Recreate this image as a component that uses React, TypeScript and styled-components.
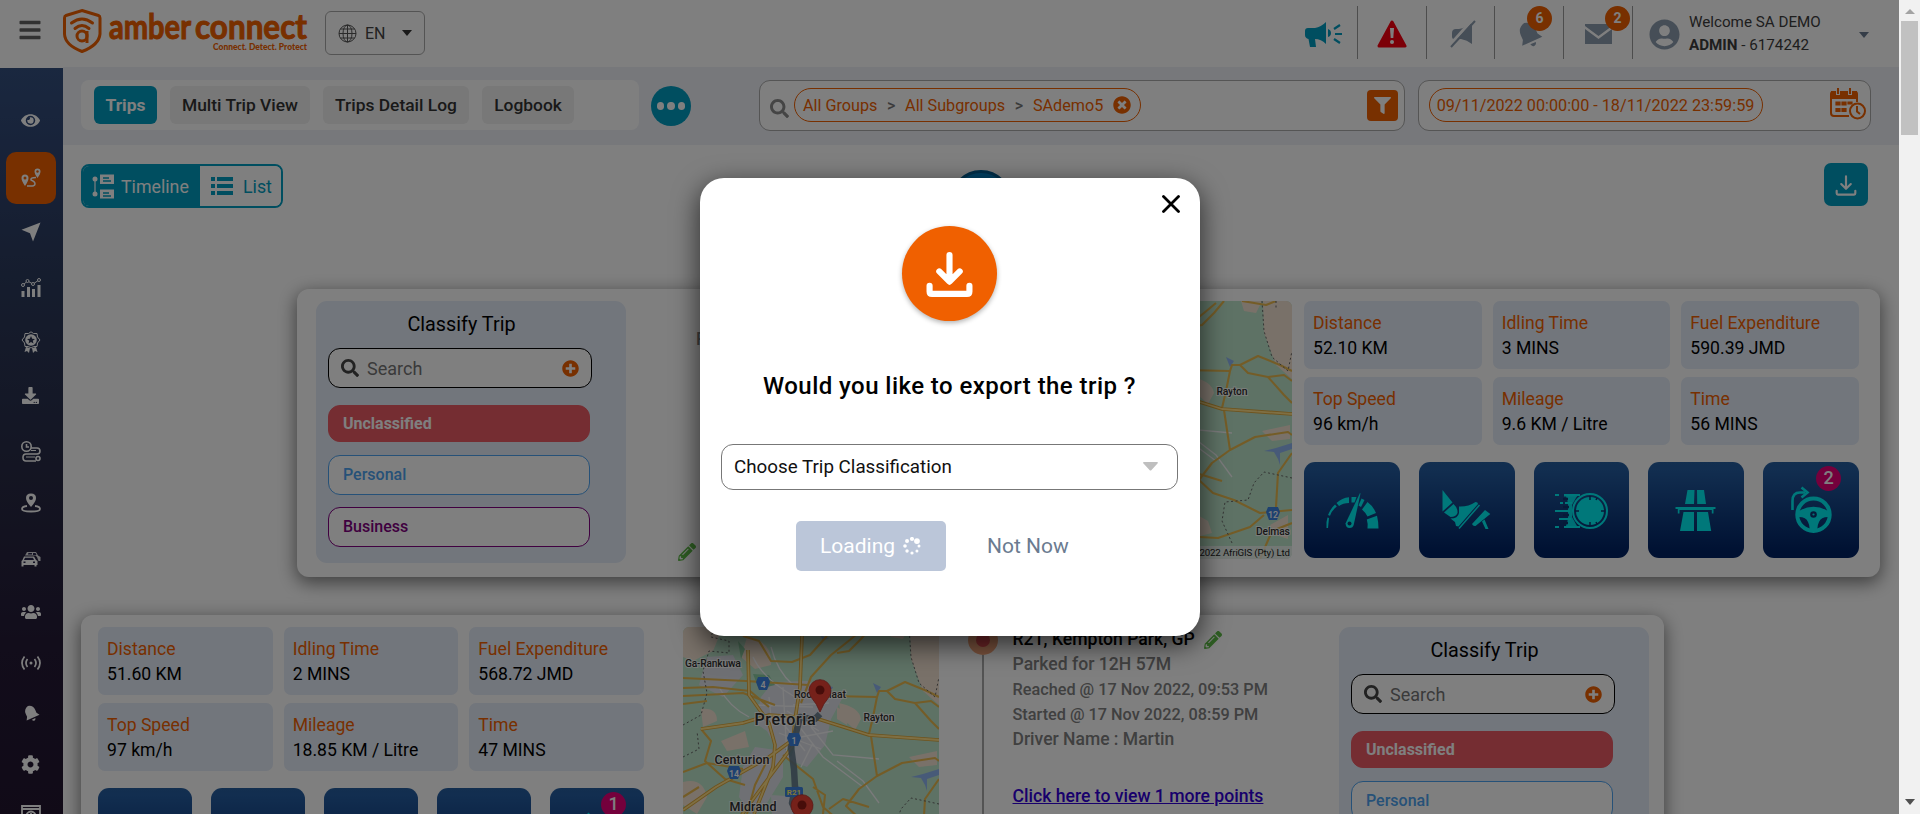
import React from "react";
import styled, { createGlobalStyle } from "styled-components";
import {
  FaBars, FaEye, FaUsers, FaCog, FaSearch, FaFilter,
  FaPlusCircle, FaTimesCircle, FaUserCircle, FaPencilAlt, FaDownload,
} from "react-icons/fa";

const Global = createGlobalStyle`
  *, *::before, *::after { box-sizing: border-box; }
  html, body { margin: 0; padding: 0; overflow: hidden; }
  body { font-family: Roboto, "Liberation Sans", sans-serif; color: #000; background: #fff; }
`;

const teal = "#009cc0";
const orange = "#f06000";

const Shell = styled.div`
  display: flex;
  width: 1920px;
  height: 814px;
  overflow: hidden;
`;
const Page = styled.div`
  position: relative;
  width: 1899px;
  height: 814px;
  overflow: hidden;
  display: flex;
  flex-direction: column;
`;
const Scrollbar = styled.div`
  width: 21px;
  background: #f1f1f1;
  display: flex;
  flex-direction: column;
  align-items: center;
  justify-content: space-between;
  padding: 9px 0 9px;
`;
const ThumbGroup = styled.div`
  display: flex;
  flex-direction: column;
  align-items: center;
  gap: 7px;
`;
const Thumb = styled.div`
  width: 17px;
  height: 114px;
  background: #c1c1c1;
`;

/* ---------- Header ---------- */
const Header = styled.header`
  height: 67px;
  flex: none;
  display: flex;
  align-items: flex-start;
  background: #fff;
`;
const MenuButton = styled.div`
  width: 63px;
  padding: 18px 0 0 18px;
  color: #626262;
  font-size: 24px;
  line-height: 0;
`;
const LangBox = styled.div`
  display: flex;
  align-items: center;
  width: 100px;
  height: 44px;
  margin: 11px 0 0 16px;
  padding: 0 12px 0 12px;
  border: 1px solid #a9a9a9;
  border-radius: 6px;
  color: #444;
  span { margin-left: 8px; flex: 1; font-size: 16px; }
`;
const Spacer = styled.div`flex: 1;`;
const HeadCell = styled.div<{ $w: number }>`
  position: relative;
  width: ${(p) => p.$w}px;
  height: 53px;
  margin-top: 6px;
  border-right: 1px solid #9b9b9b;
  display: flex;
  align-items: center;
  justify-content: center;
  padding-top: 3px;
  color: #8c9cae;
`;
const CountBadge = styled.span<{ $right: number }>`
  position: absolute;
  top: 0;
  right: ${(p) => p.$right}px;
  width: 25px;
  height: 25px;
  border-radius: 50%;
  background: ${orange};
  color: #fff;
  font-size: 14px;
  font-weight: 700;
  line-height: 25px;
  text-align: center;
`;
const UserBox = styled.div`
  display: flex;
  align-items: flex-start;
  width: 266px;
  padding: 13px 0 0 16px;
  color: #8c9cae;
`;
const Avatar = styled.div`
  padding-top: 6px;
  line-height: 0;
`;
const UserText = styled.div`
  margin: -2px 0 0 9px;
  width: 170px;
  font-size: 15.2px;
  line-height: 23px;
  color: #3c3c3c;
  b { font-weight: 700; }
`;
const UserCaret = styled.div`
  padding-top: 19px;
  line-height: 0;
`;

/* ---------- Body ---------- */
const Body = styled.div`
  display: flex;
  flex: 1;
  min-height: 0;
`;
const Sidebar = styled.nav`
  width: 63px;
  flex: none;
  margin-top: 1px;
  background: linear-gradient(#34507f 0%, #304572 12%, #2b3a5c 28%, #282a45 55%, #241a36 78%, #22152f 100%);
  display: flex;
  flex-direction: column;
  align-items: center;
  overflow: hidden;
`;
const NavItem = styled.div<{ $before: number; $active?: boolean }>`
  flex: none;
  width: 50px;
  height: ${(p) => (p.$active ? 52 : 20)}px;
  margin-top: ${(p) => p.$before}px;
  margin-right: 2px;
  border-radius: 10px;
  background: ${(p) => (p.$active ? orange : "transparent")};
  color: #fff;
  display: flex;
  align-items: center;
  justify-content: center;
`;
const Main = styled.main`
  flex: 1;
  min-width: 0;
  display: flex;
  flex-direction: column;
`;
const Toolbar = styled.div`
  height: 78px;
  flex: none;
  display: flex;
  align-items: flex-start;
  background: #eef1f7;
  padding: 13px 28px 0 18px;
`;
const Tabs = styled.div`
  display: flex;
  gap: 13px;
  width: 558px;
  height: 50px;
  padding: 6px 13px;
  border-radius: 8px;
  background: #fff;
`;
const Tab = styled.div<{ $w: number; $active?: boolean }>`
  width: ${(p) => p.$w}px;
  height: 38px;
  line-height: 39px;
  text-align: center;
  border-radius: 6px;
  white-space: nowrap;
  font-size: 17.4px;
  font-weight: ${(p) => (p.$active ? 700 : 500)};
  color: ${(p) => (p.$active ? "#fff" : "#333")};
  background: ${(p) => (p.$active ? teal : "#f0f0f0")};
`;
const MoreButton = styled.div`
  display: flex;
  align-items: center;
  justify-content: center;
  gap: 3px;
  width: 40px;
  height: 40px;
  margin: 6px 68px 0 12px;
  border-radius: 50%;
  background: ${teal};
  i { width: 7.5px; height: 8px; border-radius: 50%; background: #fff; }
`;
const FieldBox = styled.div<{ $w: number }>`
  display: flex;
  align-items: center;
  width: ${(p) => p.$w}px;
  height: 51px;
  border: 1px solid #aaa;
  border-radius: 11px;
  background: #fff;
  padding: 0 6px 0 10px;
  color: #8a8a8a;
`;
const FieldIcon = styled.div`
  margin: 5px 5px 0 0;
  line-height: 0;
`;
const Pill = styled.div<{ $w: number; $center?: boolean }>`
  display: flex;
  align-items: center;
  justify-content: ${(p) => (p.$center ? "center" : "space-between")};
  width: ${(p) => p.$w}px;
  height: 34px;
  margin-top: -1px;
  padding: 0 9px 0 8px;
  border: 1px solid ${orange};
  border-radius: 17px;
  color: ${orange};
  font-size: 16.2px;
  white-space: nowrap;
  em { font-style: normal; font-weight: 500; color: #777; }
`;
const FilterButton = styled.div`
  display: flex;
  align-items: center;
  justify-content: center;
  width: 31px;
  height: 31px;
  border-radius: 4px;
  background: ${orange};
  color: #fff;
`;
const CalendarSlot = styled.div`
  margin: -3px -2px 0 0;
  line-height: 0;
`;
const Content = styled.div`
  position: relative;
  flex: 1;
  min-height: 0;
  overflow: hidden;
  background: #fff;
  padding: 18px 0 0 18px;
`;
const ActionRow = styled.div`
  display: flex;
  justify-content: space-between;
  height: 126px;
  padding-right: 31px;
`;
const ViewToggle = styled.div`
  display: flex;
  width: 202px;
  height: 44px;
  margin-top: 1px;
  border: 2px solid ${teal};
  border-radius: 8px;
  overflow: hidden;
  font-size: 17.8px;
`;
const ToggleHalf = styled.div<{ $w: number; $on?: boolean }>`
  display: flex;
  align-items: center;
  gap: ${(p) => (p.$on ? 7 : 10)}px;
  width: ${(p) => p.$w}px;
  padding-left: ${(p) => (p.$on ? 9 : 11)}px;
  color: ${(p) => (p.$on ? "#fff" : teal)};
  background: ${(p) => (p.$on ? teal : "#fff")};
`;
const ExportButton = styled.div`
  display: flex;
  align-items: center;
  justify-content: center;
  width: 44px;
  height: 43px;
  border-radius: 7px;
  background: ${teal};
`;
const TimelineStart = styled.div`
  position: absolute;
  left: 887px;
  top: 25px;
  width: 62px;
  height: 62px;
  border-radius: 50%;
  border: 3px solid #005f94;
  background: #0082c8;
`;
const Card = styled.section<{ $shift: number }>`
  display: flex;
  width: 1583px;
  height: 288px;
  margin: 0 0 38px ${(p) => p.$shift}px;
  padding: 12px 16px 0 17px;
  border-radius: 12px;
  background: #fff;
  box-shadow: 0 5px 18px 1px rgba(0, 0, 0, 0.5);
`;

/* ---------- Classification panel ---------- */
const Panel = styled.div<{ $left: number }>`
  flex: none;
  width: 310px;
  height: 262px;
  margin-left: ${(p) => p.$left}px;
  padding: 11px 12px;
  border-radius: 11px;
  background: #e4ecf8;
`;
const PanelTitle = styled.div`
  width: 267px;
  text-align: center;
  font-size: 19.8px;
  line-height: 26px;
`;
const SearchBox = styled.div`
  display: flex;
  align-items: center;
  width: 264px;
  height: 40px;
  margin-top: 10px;
  padding: 0 12px;
  border: 1px solid #000;
  border-radius: 12px;
  background: #fff;
  color: #444;
  span { flex: 1; margin-left: 8px; font-size: 18px; color: #757575; }
`;
const Choice = styled.div<{ $c: string; $fill?: boolean; $top: number }>`
  width: 262px;
  height: ${(p) => (p.$fill ? 37 : 40)}px;
  margin-top: ${(p) => p.$top}px;
  padding-left: 14px;
  line-height: ${(p) => (p.$fill ? 35 : 38)}px;
  border: 1px solid ${(p) => p.$c};
  border-radius: 12px;
  background: ${(p) => (p.$fill ? p.$c : "#fff")};
  color: ${(p) => (p.$fill ? "#fff" : p.$c)};
  font-size: 16px;
  font-weight: ${(p) => (p.$fill ? 700 : 500)};
`;

/* ---------- Statistics ---------- */
const Stats = styled.div<{ $w: number }>`
  flex: none;
  width: ${(p) => p.$w}px;
`;
const StatGrid = styled.div`
  display: grid;
  grid-template-columns: repeat(3, 1fr);
  grid-auto-rows: 68px;
  gap: 8px 11px;
`;
const StatCell = styled.div`
  padding: 10px 0 0 9px;
  border-radius: 7px;
  background: #e4ecf8;
  font-size: 17.6px;
  line-height: 25px;
  white-space: nowrap;
  div:first-child { color: ${orange}; }
`;
const Tiles = styled.div`
  display: grid;
  grid-template-columns: repeat(5, 1fr);
  gap: 19px;
  margin-top: 17px;
`;
const Tile = styled.div`
  position: relative;
  height: 96px;
  border-radius: 11px;
  background: linear-gradient(#265e9f 0%, #245ca0 8%, #002264 94%);
  display: flex;
  align-items: center;
  justify-content: center;
`;
const TileBadge = styled.span`
  position: absolute;
  top: 4px;
  right: 18px;
  width: 25px;
  height: 25px;
  border-radius: 50%;
  background: #e80078;
  color: #fff;
  font-size: 18px;
  font-weight: 500;
  line-height: 24px;
  text-align: center;
`;

/* ---------- Trip points ---------- */
const MapFrame = styled.div<{ $left: number; $right: number }>`
  flex: none;
  width: 256px;
  height: 258px;
  margin: 0 ${(p) => p.$right}px 0 ${(p) => p.$left}px;
  border-radius: 6px;
  overflow: hidden;
  line-height: 0;
`;
const Trail = styled.div`
  flex: none;
  width: 30px;
  display: flex;
  flex-direction: column;
  align-items: center;
`;
const TrailDot = styled.div`
  width: 30px;
  height: 30px;
  margin-top: -2px;
  border: 8px solid #f5a57a;
  border-radius: 50%;
  background: #e04a50;
`;
const TrailLine = styled.div`
  width: 2px;
  flex: 1;
  background: #a8a8a8;
`;
const Point = styled.div`
  width: 326px;
  flex: none;
  padding-left: 14.5px;
  font-weight: 500;
  line-height: 25px;
  color: #808080;
  white-space: nowrap;
`;
const PointName = styled.div`
  display: flex;
  align-items: center;
  gap: 9px;
  color: #000;
  font-size: 17.6px;
`;
const PointMeta = styled.div<{ $size: number }>`
  font-size: ${(p) => p.$size}px;
`;
const MoreLink = styled.div`
  margin-top: 32px;
  font-size: 17.6px;
  color: #3100d8;
  text-decoration: underline;
`;
const SideNotes = styled.div`
  flex: none;
  width: 410px;
  padding: 25px 0 0 52px;
  display: flex;
  flex-direction: column;
  justify-content: space-between;
  color: #808080;
  font-size: 17.6px;
  font-weight: 500;
  white-space: nowrap;
  p { margin: 0 0 0 18px; line-height: 26px; }
  svg { margin-bottom: 16px; }
`;

/* ---------- Dialog ---------- */
const Overlay = styled.div`
  position: absolute;
  inset: 0;
  background: rgba(0, 0, 0, 0.5);
  display: flex;
  align-items: flex-start;
  justify-content: center;
  padding-top: 178px;
`;
const Dialog = styled.div`
  position: relative;
  display: flex;
  flex-direction: column;
  align-items: center;
  width: 500px;
  height: 458px;
  margin-left: 1px;
  padding: 48px 1px 0 0;
  border-radius: 24px;
  background: #fff;
  box-shadow: 0 8px 26px 2px rgba(0, 0, 0, 0.6);
`;
const CloseButton = styled.div`
  position: absolute;
  top: 17px;
  right: 20px;
  line-height: 0;
`;
const IconDisc = styled.div`
  display: flex;
  align-items: center;
  justify-content: center;
  width: 95px;
  height: 95px;
  border-radius: 50%;
  background: ${orange};
  box-shadow: 0 2px 5px rgba(0, 0, 0, 0.3);
`;
const Question = styled.div`
  margin-top: 49px;
  font-size: 24px;
  font-weight: 500;
  line-height: 32px;
  letter-spacing: 0.44px;
`;
const SelectBox = styled.div`
  display: flex;
  align-items: center;
  justify-content: space-between;
  width: 457px;
  height: 46px;
  margin-top: 42px;
  padding: 0 19px 1px 12px;
  border: 1px solid #777;
  border-radius: 12px;
  font-size: 18.8px;
  color: #111;
`;
const ButtonRow = styled.div`
  display: flex;
  align-items: center;
  width: 307px;
  margin: 31px 0 0 0;
  font-size: 21px;
`;
const LoadingButton = styled.div`
  display: flex;
  align-items: center;
  gap: 8px;
  width: 150px;
  height: 50px;
  padding-left: 24px;
  border-radius: 5px;
  background: #bbc6d9;
  color: #fff;
`;
const NotNow = styled.div`
  margin-left: 41px;
  color: #6b7b90;
`;

const DownloadGlyph = ({ size, w = 6 }: { size: number; w?: number }) => (
  <svg width={size} height={size} viewBox="0 0 46 46" fill="none" stroke="#fff" strokeWidth={w} strokeLinecap="round" strokeLinejoin="round">
    <path d="M23 5V30M13 21l10 10 10-10" />
    <path d="M3.500 35V40.500Q3.500 43 6 43H40Q42.500 43 42.500 40.500V35" />
  </svg>
);

const LogoSvg = styled.svg`
  margin-top: 6px;
`;
const Logo = () => (
  <LogoSvg width="246" height="50" viewBox="0 0 246 50">
    <g fill="none" stroke={orange} strokeWidth="3">
      <path d="M19 4.500L35.500 9.500Q37 10 37 12V28Q36 39 19 45.500Q2 39 1.500 28V12Q1.500 10 3 9.500Z" />
      <path d="M8.500 17Q19 9 29.500 17" strokeLinecap="round" />
      <path d="M12 22.500Q19 16.500 26 22.500" strokeLinecap="round" />
      <circle cx="19" cy="30" r="5" />
      <path d="M24 25V37" />
    </g>
    <g fontFamily="Lato, sans-serif" fontWeight="700" fontSize="34" fill={orange} stroke={orange} strokeWidth="1">
      <text x="46" y="33" textLength="82" lengthAdjust="spacingAndGlyphs">amber</text>
      <text x="132" y="33" textLength="112" lengthAdjust="spacingAndGlyphs">connect</text>
    </g>
    <text x="150" y="44" textLength="94" lengthAdjust="spacingAndGlyphs" fontFamily="Lato, sans-serif" fontWeight="900" fontSize="8.500" fill={orange}>Connect. Detect. Protect</text>
  </LogoSvg>
);

const GlobeIcon = () => (
  <svg width="19" height="19" viewBox="0 0 19 19" fill="none" stroke="#555" strokeWidth="1">
    <circle cx="9.500" cy="9.500" r="8.500" />
    <ellipse cx="9.500" cy="9.500" rx="4.500" ry="8.500" />
    <path d="M9.500 1V18M1 9.500H18M2.500 5H16.500M2.500 14H16.500" />
  </svg>
);

const Megaphone = () => (
  <svg width="37" height="27" viewBox="0 0 37 27" fill={teal}>
    <path d="M0 10Q0 7 3 7H10Q16 6 21 1V23Q16 18 10 18L11 26H5L3.500 18Q0 17 0 14ZM23 8Q26 9 26 12T23 16Z" />
    <path d="M29 8L35 4M30 13H37M29 18L35 22" stroke={teal} strokeWidth="2.200" />
  </svg>
);

const Warning = () => (
  <svg width="30" height="28" viewBox="0 0 30 28">
    <path d="M15 2L28 26H2Z" fill="#f80010" stroke="#f80010" strokeWidth="3" strokeLinejoin="round" />
    <path d="M13 8H17L16.300 18H13.700Z" fill="#fff" />
    <circle cx="15" cy="22" r="2" fill="#fff" />
  </svg>
);

const Muted = () => (
  <svg width="30" height="28" viewBox="-4 0 30 28">
    <path d="M2 13Q2 9 6 9H9Q16 8 20 3L22 4V24Q17 20 11 19H4Q2 19 2 17Z" fill="#8c9cae" />
    <path d="M0 25L23 -1" stroke="#fff" strokeWidth="3" />
    <path d="M1 27L25 1" stroke="#8c9cae" strokeWidth="2" />
  </svg>
);

const TiltedBell = ({ size }: { size: number }) => (
  <svg width={size} height={size} viewBox="0 0 26 28" fill="currentColor">
    <g transform="rotate(-24 13 14)">
      <path d="M13 2Q5 4 5 12V17L2 22H24L21 17V12Q21 4 13 2ZM10 24H16Q15.500 27 13 27T10 24Z" />
    </g>
  </svg>
);

const Mail = () => (
  <svg width="27" height="20" viewBox="0 0 27 20" fill="#8c9cae">
    <path d="M0 0H27V2L13.500 12L0 2ZM0 5L13.500 15L27 5V20H0Z" />
  </svg>
);

const Calendar = () => (
  <svg width="36" height="32" viewBox="0 0 36 32" fill="none" stroke={orange} strokeWidth="2">
    <path d="M19 28H4Q1 28 1 25V6Q1 4 3 4H25Q27 4 27 6V14" />
    <path d="M2 4H26V10H2Z" fill={orange} />
    <path d="M8 1V7M20 1V7" stroke="#fff" strokeWidth="4" />
    <path d="M8 0V6M20 0V6" />
    <path d="M6 14h4v3h-4zM12 14h4v3h-4zM18 14h4v2h-4zM6 20.500h4v3h-4zM12 20.500h4v3h-4z" strokeWidth="1.200" fill={orange} />
    <circle cx="27.500" cy="23" r="7.500" fill="#fff" />
    <path d="M27 18V23.500L30 26" />
  </svg>
);

const RouteIcon = () => (
  <svg width="20" height="20" viewBox="0 0 20 20">
    <path d="M4 6.500Q.5 6.500 .5 10Q.5 13 4 18Q7.500 13 7.500 10Q7.500 6.500 4 6.500ZM16.500 .5Q13.500 .5 13.500 3.500Q13.500 6 16.500 10Q19.500 6 19.500 3.500Q19.500 .5 16.500 .5Z" fill="#fff" />
    <circle cx="4" cy="10" r="1.500" fill={orange} />
    <circle cx="16.500" cy="3.500" r="1.200" fill={orange} />
    <path d="M15 9.500Q9 9.500 10 12Q14 13.500 14 16Q14 18.500 8 18H6" fill="none" stroke="#fff" strokeWidth="1.500" />
  </svg>
);

const ArrowIcon = () => (
  <svg width="20" height="20" viewBox="0 0 20 20" fill="#fff">
    <path d="M.5 7.800L19.500 .6L12 19.400L9 11.200Z" />
  </svg>
);

const ChartIcon = () => (
  <svg width="20" height="20" viewBox="0 0 20 20" fill="#fff">
    <path d="M.5 14H3.500V20H.5ZM6 10H9V20H6ZM11 12H14V20H11ZM16.500 8H19.500V20H16.500Z" />
    <path d="M2 8L6.500 4L12 7L18 3" fill="none" stroke="#fff" />
    <g fill="#28385a" stroke="#fff"><circle cx="2" cy="8" r="1.500" /><circle cx="6.500" cy="4" r="1.500" /><circle cx="12" cy="7" r="1.500" /><circle cx="18" cy="3" r="1.500" /></g>
  </svg>
);

const AwardIcon = () => (
  <svg width="20" height="22" viewBox="0 0 20 22">
    <path d="M10 .8L12.500 2.500L16 2.500L16.500 6L19 9L16.500 12L16 15.500L12.500 15.500L10 17L7.500 15.500L4 15.500L3.500 12L1 9L3.500 6L4 2.500L7.500 2.500Z" fill="none" stroke="#fff" />
    <circle cx="10" cy="9" r="5.800" fill="#fff" />
    <path d="M10 5L11.200 7.800L14 8L11.800 9.800L12.500 12.500L10 11L7.500 12.500L8.200 9.800L6 8L8.800 7.800Z" fill="#28304e" />
    <path d="M5 16L3.500 21L6 20L8 22L9 17ZM15 16L16.500 21L14 20L12 22L11 17Z" fill="#fff" />
  </svg>
);

const HistoryIcon = () => (
  <svg width="20" height="22" viewBox="0 0 20 22" fill="none" stroke="#fff" strokeWidth="1.600">
    <circle cx="5.500" cy="5.500" r="4.700" />
    <path d="M5.500 3V6H8M10 7H16Q19 7 19 10T16 13H5Q2 13 2 16.500T5 20H15" />
    <path d="M10 9.500H15M5 16H14" strokeWidth="1" />
    <circle cx="17" cy="17.500" r="2" />
  </svg>
);

const PinIcon = () => (
  <svg width="20" height="20" viewBox="0 0 20 20">
    <path d="M10 .5Q5 .5 5 5Q5 8.500 10 14Q15 8.500 15 5Q15 .5 10 .5Z" fill="#fff" />
    <circle cx="10" cy="5" r="2" fill="#282a45" />
    <path d="M6 13Q1 13.500 1 16Q1 18.500 10 18.500T19 16Q19 13.500 14 13" fill="none" stroke="#fff" strokeWidth="1.800" />
  </svg>
);

const CarsIcon = () => (
  <svg width="20" height="16" viewBox="0 0 20 16" fill="#fff">
    <path d="M4 4.500L6 1H15L17 4.500L19.500 6V10H17.500L16 6L14.500 4.500Z" fillOpacity=".85" />
    <path d="M7 3L7.500 2H11V3.500H7ZM12 2H14.500L15.500 4H12Z" fill="#28264a" />
    <path d="M3 5.500H13L15 9L16.500 10V14H15.500V15.500H13.500V14H2.500V15.500H.5V10L1.500 9Z" />
    <path d="M4 6.800H12L13 9H3ZM2.500 10.500H4.500V12H2.500ZM12 10.500H14V12H12Z" fill="#28264a" />
  </svg>
);

const BroadcastIcon = () => (
  <svg width="20" height="20" viewBox="0 0 20 20" fill="none" stroke="#fff" strokeWidth="1.700">
    <circle cx="10" cy="10" r="1.500" fill="#fff" stroke="none" />
    <path d="M6.500 6Q3.500 10 6.500 14M13.500 6Q16.500 10 13.500 14M3.500 3.500Q-1.500 10 3.500 16.500M16.500 3.500Q21.500 10 16.500 16.500" />
  </svg>
);

const BrowserIcon = () => (
  <svg width="20" height="20" viewBox="0 0 20 20" fill="none" stroke="#fff" strokeWidth="1.800">
    <path d="M1 2H19V18H1ZM1 5H19" /><circle cx="10" cy="12" r="4.500" /><path d="M10 9V12H13" />
  </svg>
);

const TimelineGlyph = () => (
  <svg width="22" height="25" viewBox="0 0 22 25" fill="#fff">
    <circle cx="3" cy="5" r="2.500" /><circle cx="3" cy="20" r="2.500" />
    <path d="M2.400 6H3.600V19H2.400ZM8 .5H22V10H8ZM8 15.500H22V24.500H8Z" />
    <path d="M11 4H17M11 7H19M11 19H17M11 22H19" stroke={teal} strokeWidth="1.300" />
  </svg>
);

const ListGlyph = () => (
  <svg width="22" height="18" viewBox="0 0 22 18" fill={teal}>
    <path d="M0 0H4V4H0ZM6 0H22V4H6ZM0 7H4V11H0ZM6 7H22V11H6ZM0 14H4V18H0ZM6 14H22V18H6Z" />
  </svg>
);

/* Driving-event icons, drawn in a 56 x 48 box. */
const cyan = "#00f0f4";
const tileShade = "#0c3470";
const EventIcon = ({ kind }: { kind: number }) => (
  <svg width="56" height="48" viewBox="0 0 56 48" fill={cyan}>
    {kind === 0 && (
      <g>
        <path d="M2.500 42V36L3.500 31.500L5 32L4 42Z" />
        <path d="M4 29Q7 22 11 18.500L12.800 20.500Q8 24 6 29.800Z" />
        <path d="M12.500 17Q18 12 25 11.300V17Q19 17 15 20Z" />
        <path d="M27.500 11H32.500L30.500 16.500H27.500Z" />
        <path d="M37.500 12.500L40.500 14L37 21L34.500 19.500Z" />
        <path d="M43.500 16Q49 20 52 27L43.500 30.500Q41 26 38 23.500Z" />
        <path d="M44 33L53 29.800Q54.500 36 54.500 42.500H43.500Q44 37 42.800 33.500Z" />
        <path d="M36 7L36.500 7.500L29.800 38.500Q29 42 25.500 42T21.500 37.500Z" />
        <circle cx="25.500" cy="37.500" r="2" fill={tileShade} />
      </g>
    )}
    {kind === 1 && (
      <g>
        <path d="M3.500 4L13.500 16.500L3.500 25.500ZM5 26.500L14.500 18Q19 22 18.500 27Q17 31 11.500 31Z" />
        <path d="M11.500 32.500Q19 32.500 20 27V20.500Q29 21 36.500 16Q39 16 39 18L19.500 40.500L17 40L16 36Z" />
        <path d="M40.500 19L20 42.500" stroke={cyan} strokeWidth="1.500" />
        <path d="M46 24L51.300 28L36.500 40Q34 40.500 33 38ZM43 35.500L45.500 33.500L49.500 43H46.500Z" />
      </g>
    )}
    {kind === 2 && (
      <g fill="none" stroke={cyan} strokeWidth="2">
        <circle cx="37" cy="25" r="17" />
        <circle cx="37" cy="25" r="14" fill={cyan} stroke="none" />
        <path d="M37 10V14M37 36V40M22 25H26M48 25H52M44 12L43 14M44 38L43 36" stroke={tileShade} strokeWidth="1.500" />
        <path d="M2 9H6M11 9H27M11 9.500H24M12 17H19M2 25H17M7 17H10M6 33H18M11 41H27M2 41H6" />
        <path d="M13 10H24L19 19V31L24 40H13L15 33V17Z" fill={cyan} stroke="none" fillOpacity=".9" />
        <path d="M10 13H15M10 21H16M10 29H16M10 37H15" stroke={tileShade} strokeWidth="2.500" />
      </g>
    )}
    {kind === 3 && (
      <path d="M19.500 4H26.500L26 18H17ZM29 4H36L38 18H29.200ZM7.500 21H47.500V23H45.500V27.500H43.800V24H11.500V27.500H9.800V23H7.500ZM15.500 26H26V45H12ZM29 26H40L43.200 45H29Z" />
    )}
    {kind === 4 && (
      <g>
        <path d="M9.500 24V15Q9.500 6.500 17 6.500H22" fill="none" stroke={cyan} strokeWidth="2.600" />
        <path d="M18.500 1.500L24.500 6.500L18.500 11.500" fill="none" stroke={cyan} strokeWidth="2.600" />
        <circle cx="30.500" cy="28.700" r="16.200" fill="none" stroke={cyan} strokeWidth="4" />
        <path d="M16 25Q30.500 16.500 45 25L45 31Q38 31 36 36Q34 40 34.500 44H26.500Q27 40 25 36Q23 31 16 31Z" />
        <circle cx="30.500" cy="28.500" r="3.300" fill={tileShade} /><circle cx="30.500" cy="28.500" r="1.100" />
      </g>
    )}
  </svg>
);

const RoadShield = ({ x, y, t }: { x: number; y: number; t: string }) => (
  <g>
    <path d={`M${x - 5} ${y - 7}H${x + 5}L${x + 7} ${y - 2}L${x + 4} ${y + 6}H${x - 4}L${x - 7} ${y - 2}Z`} fill="#3c82e0" />
    <text x={x} y={y + 3.5} fontSize="9" fontWeight="500" fill="#fff" stroke="none" textAnchor="middle">{t}</text>
  </g>
);

const MapPin = ({ x, y }: { x: number; y: number }) => (
  <g>
    <path d={`M${x} ${y}Q${x - 3} ${y - 8} ${x - 9} ${y - 15}A11 11 0 1 1 ${x + 9} ${y - 15}Q${x + 3} ${y - 8} ${x} ${y}Z`} fill="#ea4335" stroke="#b8302a" strokeWidth=".8" />
    <circle cx={x} cy={y - 22} r="4.500" fill="#8f1a14" />
  </g>
);

type Place = { x: number; y: number; name: string; w: number; size: number };
const westPlaces: Place[] = [
  { x: 30, y: 40, name: "Ga-Rankuwa", w: 56, size: 10.5 },
  { x: 137, y: 71, name: "Roodeplaat", w: 52, size: 10.5 },
  { x: 102, y: 98, name: "Pretoria", w: 61, size: 16 },
  { x: 59, y: 137, name: "Centurion", w: 55, size: 12.5 },
  { x: 70, y: 184, name: "Midrand", w: 47, size: 12.5 },
];
const eastPlaces: Place[] = [
  { x: 196, y: 94, name: "Rayton", w: 31, size: 10.5 },
  { x: 237, y: 234, name: "Delmas", w: 34, size: 10.5 },
];

const TripMap = ({ west }: { west?: boolean }) => (
  <svg width="256" height="258" viewBox="0 0 256 258">
    <rect width="256" height="258" fill="#bce4ca" />
    <g fill="#f3e3d2">
      <path d="M0 0H40L30 24L10 34L0 30ZM64 10Q90 14 88 38L72 42L58 30ZM227 0H256V78L240 64L228 32ZM205 0H226L220 12L208 10ZM238 30H256V52L244 48Z" />
      <path d="M156 76Q176 80 178 92L172 103L158 90ZM18 82Q34 80 34 94L20 100ZM38 114L62 104L66 120L44 124ZM154 80L166 88L164 98L154 92ZM226 130L254 124V138L236 140ZM0 155Q20 150 24 170L14 187L0 178ZM158 212L172 220L176 232L160 236ZM234 224L252 214V238L240 234Z" />
    </g>
    <g fill="#dfe1e8">
      <path d="M90 55L124 54L160 70L148 92L142 118L124 140L98 130L84 104L72 96L78 70ZM72 120L100 124L100 150L84 176L70 190L56 170L60 140ZM24 30L50 28L60 48L40 70L16 58ZM88 168L118 170L124 200L90 210Z" />
    </g>
    <g fill="#8ccda2"><path d="M70 47L86 48L92 58L76 62ZM102 122L112 120L108 130ZM55 14L62 22L58 32Z" /></g>
    <g fill="#8fb4f0"><path d="M140 58L150 60L147 66L140 65ZM190 56L198 60L194 66ZM138 9L146 11L140 14ZM114 158L120 162L116 166Z" />
      <path d="M256 142L240 147L228 150L238 151L242 158L244 164L244 152L256 148Z" /></g>
    <g fill="none" stroke="#f4f4f6" strokeWidth="1.300">
      <path d="M88 20Q94 44 110 58M70 30Q80 52 112 70M112 94L140 130L180 160M128 100L150 128L196 132M86 70L90 110M72 78L130 80M76 90L118 100M100 60L104 130M96 106L138 122M154 134L180 154L196 176M130 116L118 140M36 60Q46 80 66 90" />
      <path d="M104 84L136 104M98 94L122 124M110 78L146 76M118 110L150 104" />
    </g>
    <g fill="none" stroke="#e9b94e" strokeWidth="2.100" strokeLinejoin="round">
      <path d="M0 51L63 54L125 58M0 61L30 60L67 64L86 80M0 69L20 68L60 66L92 78M0 77L24 74M60 9L76 14L88 34L109 35L127 28L144 9M148 28L168 12L180 2M148 28L128 50L118 76" />
      <path d="M148 69L194 70L196 64L204 64L222 55L244 64L256 70M204 64L212 72L232 76L248 94L256 102M194 70L190 90L186 107M232 76L248 74L256 80M188 109L194 149L219 136L252 131L256 134" />
      <path d="M194 149L176 162L163 179L177 192L198 199L224 212L256 209M163 236L182 237L214 226L228 214M256 152L242 172L240 206M154 26L166 24L178 12L188 0M206 0L230 4L240 0M18 102L28 114L22 134L42 152L62 158M86 130L72 158L64 187M100 128L130 152L140 180L154 192M256 222L236 230L224 258M146 182L160 172L186 180M0 145L24 136L60 142M0 170L16 160M130 160L142 168L140 187" />
    </g>
    <g fill="none" stroke="#dca63a" strokeWidth="3.600" strokeLinejoin="round">
      <path d="M119 9L117 60L113 86L109 120L79 160L50 200M65 23L66 68L86 96L92 118L90 140L71 187M0 183L33 160L86 130L108 114M18 102L60 96L86 88L132 91L186 108L256 113" />
    </g>
    <g fill="none" stroke="#ffdf87" strokeWidth="1.800" strokeLinejoin="round">
      <path d="M119 9L117 60L113 86L109 120L79 160L50 200M65 23L66 68L86 96L92 118L90 140L71 187M0 183L33 160L86 130L108 114M18 102L60 96L86 88L132 91L186 108L256 113" />
    </g>
    <path d="M0 98L18 88L24 66L20 44L26 24L46 26L46 14L28 10L30 4M226 0L228 30L236 56L252 70L256 50M240 0V9M256 177L228 171L218 182L212 199L189 201L186 220L196 242M0 130L16 122L14 104" fill="none" stroke="#666" strokeWidth="1" strokeDasharray="2 2.500" />
    <RoadShield x={237} y={213} t="12" />
    {west && (
      <g>
        <path d="M137 87L132 92L122 91L117 90L113 106L108 120L111 142L112 160L109 176L116 190" fill="none" stroke="#62788a" strokeWidth="6.500" strokeOpacity=".9" strokeLinejoin="round" />
        <RoadShield x={80} y={57} t="4" /><RoadShield x={111} y={113} t="1" /><RoadShield x={51} y={146} t="14" />
        <rect x="102" y="160" width="18" height="10" rx="1.500" fill="#3c82e0" />
        <text x="111" y="168" fontSize="8" fontWeight="700" fill="#ffee70" textAnchor="middle">R21</text>
      </g>
    )}
    <g fill="#303030" stroke="#fff" strokeOpacity=".8" strokeWidth="2" paintOrder="stroke" textAnchor="middle" fontWeight="500">
      {(west ? [...westPlaces, ...eastPlaces] : eastPlaces).map((p) => (
        <text key={p.name} x={p.x} y={p.y} fontSize={p.size} textLength={p.w}>{p.name}</text>
      ))}
    </g>
    {west && <g><MapPin x={137} y={85} /><MapPin x={119} y={200} /></g>}
    <rect x="100" y="245" width="156" height="13" fill="#f5f5f5" fillOpacity=".75" />
    <text x="254" y="255" textAnchor="end" fontSize="9.700" fill="#222" textLength="98">©2022 AfriGIS (Pty) Ltd</text>
  </svg>
);

const ClassifyPanel = ({ left }: { left: number }) => (
  <Panel $left={left}>
    <PanelTitle>Classify Trip</PanelTitle>
    <SearchBox>
      <FaSearch size={18} /><span>Search</span><FaPlusCircle size={17} color={orange} />
    </SearchBox>
    <Choice $c="#ea5a64" $fill $top={17}>Unclassified</Choice>
    <Choice $c="#4da3f0" $top={13}>Personal</Choice>
    <Choice $c="#800080" $top={12}>Business</Choice>
  </Panel>
);

type Stat = [string, string];
const StatsBlock = ({ w, stats, count }: { w: number; stats: Stat[]; count: number }) => (
  <Stats $w={w}>
    <StatGrid>
      {stats.map(([k, v]) => (
        <StatCell key={k}><div>{k}</div><div>{v}</div></StatCell>
      ))}
    </StatGrid>
    <Tiles>
      {[0, 1, 2, 3, 4].map((k) => (
        <Tile key={k}><EventIcon kind={k} />{k === 4 && <TileBadge>{count}</TileBadge>}</Tile>
      ))}
    </Tiles>
  </Stats>
);

const first: Stat[] = [["Distance", "52.10 KM"], ["Idling Time", "3 MINS"], ["Fuel Expenditure", "590.39 JMD"], ["Top Speed", "96 km/h"], ["Mileage", "9.6 KM / Litre"], ["Time", "56 MINS"]];
const second: Stat[] = [["Distance", "51.60 KM"], ["Idling Time", "2 MINS"], ["Fuel Expenditure", "568.72 JMD"], ["Top Speed", "97 km/h"], ["Mileage", "18.85 KM / Litre"], ["Time", "47 MINS"]];

const navItems: { icon: React.ReactNode; before: number; active?: boolean }[] = [
  { icon: <FaEye size={19} />, before: 42 },
  { icon: <RouteIcon />, before: 22, active: true },
  { icon: <ArrowIcon />, before: 18 },
  { icon: <ChartIcon />, before: 35 },
  { icon: <AwardIcon />, before: 35 },
  { icon: <FaDownload size={17} />, before: 33 },
  { icon: <HistoryIcon />, before: 37 },
  { icon: <PinIcon />, before: 31 },
  { icon: <CarsIcon />, before: 36 },
  { icon: <FaUsers size={20} />, before: 33 },
  { icon: <BroadcastIcon />, before: 31 },
  { icon: <TiltedBell size={18} />, before: 30 },
  { icon: <FaCog size={19} />, before: 31 },
  { icon: <BrowserIcon />, before: 30 },
];

const spinner = [2.1, 2.9, 1.5, 1.5, 1.6, 1.7, 1.8, 2];

export default function App() {
  return (
    <>
      <Global />
      <Shell>
        <Page>
          <Header>
            <MenuButton><FaBars /></MenuButton>
            <Logo />
            <LangBox><GlobeIcon /><span>EN</span>
              <svg width="10" height="6"><path d="M0 0H10L5 6Z" fill="#333" /></svg>
            </LangBox>
            <Spacer />
            <HeadCell $w={69}><Megaphone /></HeadCell>
            <HeadCell $w={69}><Warning /></HeadCell>
            <HeadCell $w={68}><Muted /></HeadCell>
            <HeadCell $w={69}><TiltedBell size={28} /><CountBadge $right={11}>6</CountBadge></HeadCell>
            <HeadCell $w={69}><Mail /><CountBadge $right={2}>2</CountBadge></HeadCell>
            <UserBox>
              <Avatar><FaUserCircle size={31} /></Avatar>
              <UserText><div>Welcome SA DEMO</div><b>ADMIN</b> - 6174242</UserText>
              <UserCaret>
                <svg width="10" height="6"><path d="M0 0H10L5 6Z" fill="#6b7b90" /></svg>
              </UserCaret>
            </UserBox>
          </Header>
          <Body>
            <Sidebar>
              {navItems.map((n, i) => (
                <NavItem key={i} $before={n.before} $active={n.active}>{n.icon}</NavItem>
              ))}
            </Sidebar>
            <Main>
              <Toolbar>
                <Tabs>
                  <Tab $w={63} $active>Trips</Tab>
                  <Tab $w={140}>Multi Trip View</Tab>
                  <Tab $w={146}>Trips Detail Log</Tab>
                  <Tab $w={92}>Logbook</Tab>
                </Tabs>
                <MoreButton><i /><i /><i /></MoreButton>
                <FieldBox $w={646}>
                  <FieldIcon><FaSearch size={19} /></FieldIcon>
                  <Pill $w={347}>
                    <span>All Groups</span><em>&gt;</em><span>All Subgroups</span><em>&gt;</em><span>SAdemo5</span>
                    <FaTimesCircle size={18} />
                  </Pill>
                  <Spacer />
                  <FilterButton><FaFilter size={17} /></FilterButton>
                </FieldBox>
                <Spacer />
                <FieldBox $w={453}>
                  <Pill $w={334} $center>09/11/2022 00:00:00 - 18/11/2022 23:59:59</Pill>
                  <Spacer />
                  <CalendarSlot><Calendar /></CalendarSlot>
                </FieldBox>
              </Toolbar>
              <Content>
                <ActionRow>
                  <ViewToggle>
                    <ToggleHalf $w={117} $on><TimelineGlyph />Timeline</ToggleHalf>
                    <ToggleHalf $w={81}><ListGlyph />List</ToggleHalf>
                  </ViewToggle>
                  <ExportButton><DownloadGlyph size={22} w={4.5} /></ExportButton>
                </ActionRow>
                <TimelineStart />
                <Card $shift={216}>
                  <ClassifyPanel left={2} />
                  <SideNotes>
                    <p>Parked for 13H 20M</p>
                    <FaPencilAlt size={18} color="#5dbb46" />
                  </SideNotes>
                  <MapFrame $left={0} $right={12}><TripMap /></MapFrame>
                  <StatsBlock w={555} stats={first} count={2} />
                </Card>
                <Card $shift={0}>
                  <StatsBlock w={546} stats={second} count={1} />
                  <MapFrame $left={39} $right={29}><TripMap west /></MapFrame>
                  <Trail><TrailDot /><TrailLine /></Trail>
                  <Point>
                    <PointName>R21, Kempton Park, GP <FaPencilAlt size={18} color="#5dbb46" /></PointName>
                    <PointMeta $size={17.6}>Parked for 12H 57M</PointMeta>
                    <PointMeta $size={16.25}>Reached @ 17 Nov 2022, 09:53 PM</PointMeta>
                    <PointMeta $size={16.25}>Started @ 17 Nov 2022, 08:59 PM</PointMeta>
                    <PointMeta $size={17.5}>Driver Name : Martin</PointMeta>
                    <MoreLink>Click here to view 1 more points</MoreLink>
                  </Point>
                  <ClassifyPanel left={15} />
                </Card>
              </Content>
            </Main>
          </Body>
          <Overlay>
            <Dialog>
              <CloseButton>
                <svg width="18" height="18" viewBox="0 0 18 18" stroke="#000" strokeWidth="2.800" strokeLinecap="round">
                  <path d="M1.500 1.500L16.500 16.500M16.500 1.500L1.500 16.500" />
                </svg>
              </CloseButton>
              <IconDisc><DownloadGlyph size={47} /></IconDisc>
              <Question>Would you like to export the trip ?</Question>
              <SelectBox>Choose Trip Classification
                <svg width="15" height="9"><path d="M0 1Q0 0 1 0H14Q15.500 0 14.500 1.500L8.500 8Q7.500 9 6.500 8L.5 1.500Z" fill="#bfbfbf" /></svg>
              </SelectBox>
              <ButtonRow>
                <LoadingButton>Loading
                  <svg width="18" height="18" viewBox="0 0 18 18" fill="#fff">
                    {spinner.map((r, i) => {
                      const a = (i * Math.PI) / 4 - Math.PI / 2;
                      return <circle key={i} cx={9 + 7 * Math.cos(a)} cy={9 + 7 * Math.sin(a)} r={r} />;
                    })}
                  </svg>
                </LoadingButton>
                <NotNow>Not Now</NotNow>
              </ButtonRow>
            </Dialog>
          </Overlay>
        </Page>
        <Scrollbar>
          <ThumbGroup>
            <svg width="10" height="5"><path d="M0 5L5 0L10 5Z" fill="#a3a3a3" /></svg>
            <Thumb />
          </ThumbGroup>
          <svg width="10" height="6"><path d="M0 0H10L5 6Z" fill="#505050" /></svg>
        </Scrollbar>
      </Shell>
    </>
  );
}
